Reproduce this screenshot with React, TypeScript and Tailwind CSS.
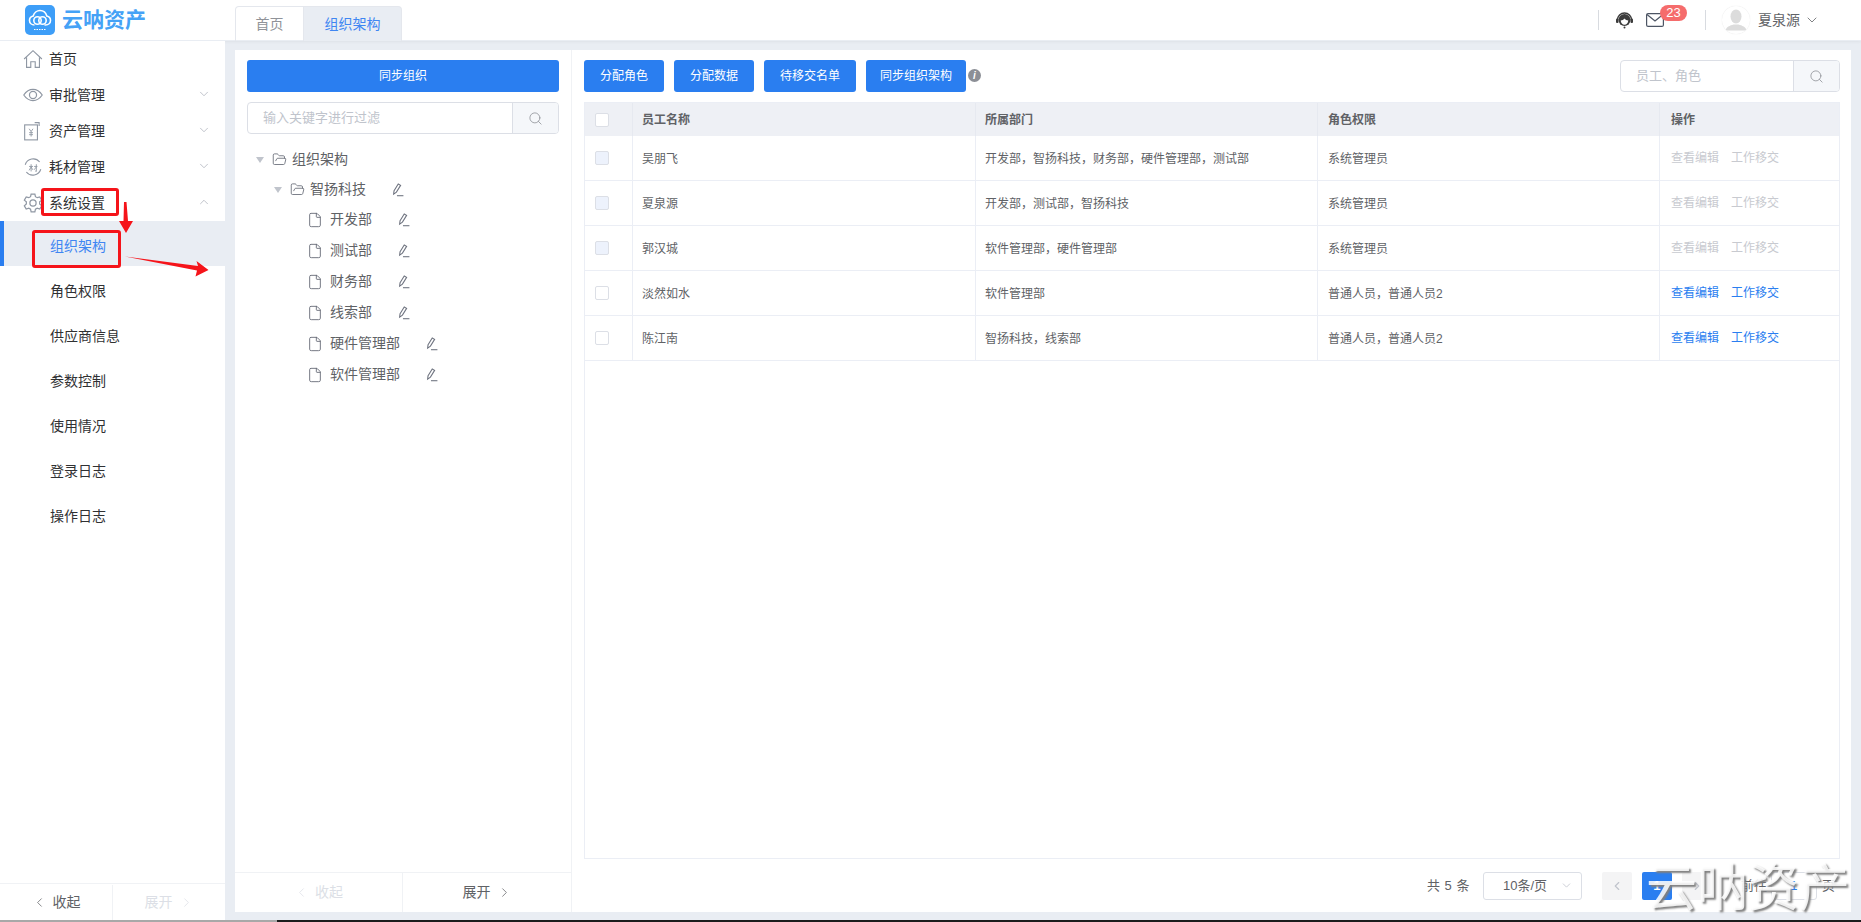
import { ChevronDown, ChevronLeft, ChevronRight, ChevronUp, File, FolderOpen, Search } from "lucide-react"

const font = "font-['Liberation_Sans','Noto_Sans_CJK_SC',sans-serif]"

function HouseIcon() {
  return (
    <svg viewBox="0 0 18 18" className="h-[20px] w-[20px]" fill="none" stroke="#8f97a3" strokeWidth="1">
      <path d="M1 9 9 1.5 17 9" />
      <path d="M3.2 7.5V16.5H7V11.5H11V16.5H14.8V7.5" />
    </svg>
  )
}

function EyeIcon() {
  return (
    <svg viewBox="0 0 18 18" className="h-[20px] w-[20px]" fill="none" stroke="#8f97a3" strokeWidth="1.1">
      <path d="M.7 9C3 5.6 5.8 4 9 4s6 1.600 8.300 5c-2.300 3.400-5.100 5-8.300 5S3 12.400.7 9Z" />
      <circle cx="9" cy="9" r="3.200" />
    </svg>
  )
}

function MoneyIcon() {
  return (
    <svg viewBox="0 0 18 18" className="h-[20px] w-[20px]" fill="none" stroke="#8f97a3" strokeWidth="1">
      <rect x="1.500" y="3.500" width="11.500" height="13.500" />
      <path d="M14.500 4.500V1.500H10.500" />
      <path d="M5.500 7 7.300 9.500 9 7M7.300 9.500V14M5.500 10.500H9M5.500 12.300H9" strokeWidth=".8" />
    </svg>
  )
}

function MaterialIcon() {
  return (
    <svg viewBox="0 0 18 18" className="h-[20px] w-[20px]" fill="none" stroke="#8f97a3" strokeWidth="1">
      <path d="M2 7A7.500 7.500 0 0 1 15 4.500" />
      <path d="M16 11A7.500 7.500 0 0 1 3 13.500" />
      <path d="M5.500 8.500H9M7.300 6.500V13M7.300 9 5.500 12M7.300 9 8.800 11.500M10 8.500H13M12 6.500V13L11 12.600M12 9 10 11.500" strokeWidth=".8" />
    </svg>
  )
}

function GearIcon() {
  return (
    <svg viewBox="0 0 18 18" className="h-[20px] w-[20px]" fill="none" stroke="#8f97a3" strokeWidth="1.100">
      <path d="M7.300 1h3.400l.5 2.300 1.600.9 2.300-.7 1.700 2.900-1.800 1.600v1.900l1.800 1.600-1.700 2.900-2.300-.7-1.600.9-.5 2.300H7.300l-.5-2.300-1.600-.9-2.300.7-1.700-2.900 1.800-1.600V8L1.200 6.400l1.700-2.900 2.300.7 1.600-.9Z" />
      <circle cx="9" cy="9" r="2.800" />
    </svg>
  )
}

function PencilIcon() {
  return (
    <svg viewBox="0 0 12 13" className="h-[14px] w-[13px] shrink-0" fill="none" stroke="#6f7480" strokeWidth="1">
      <path d="M2.800 7.200 6.700 .9l2.200 1.300L5 8.500 2.400 10.300Z" />
      <path d="M5.500 11.800H11.500" />
    </svg>
  )
}

function Logo() {
  return (
    <div className="flex h-[30px] w-[30px] items-center justify-center rounded-[5px] bg-[#3d9ef8]">
      <svg viewBox="0 0 30 30" className="h-[30px] w-[30px]" fill="none" stroke="#fff" strokeWidth="1.600">
        <path d="M9.500 20C6.800 20 4.500 18.200 4.500 15.500c0-2.300 1.500-4 3.700-4.500C9 8 11.800 5.500 15 5.500c3.300 0 6 2.500 6.800 5.500 2.200.5 3.700 2.200 3.700 4.500 0 2.700-2.200 4.500-5 4.500h-1" />
        <circle cx="12.500" cy="15.500" r="3.700" />
        <circle cx="17.500" cy="15.500" r="3.700" />
        <path d="M9 24.500H21" strokeWidth="1" strokeDasharray="1.500 1" />
      </svg>
    </div>
  )
}

function Headset() {
  return (
    <svg viewBox="0 0 17 18" className="h-[18px] w-[17px]">
      <path d="M1.500 9a7 7 0 0 1 14 0" fill="none" stroke="#3c3c3c" strokeWidth="1.500" />
      <circle cx="8.500" cy="9" r="6" fill="#3c3c3c" />
      <path d="M4.700 9.500c1.500 0 3-1 3.800-2 .8 1 2.300 2 3.800 2-.2 2.500-1.700 4.200-3.800 4.200S4.900 12 4.700 9.500Z" fill="#fff" />
      <rect x="0" y="7.500" width="2.500" height="4.500" rx="1" fill="#3c3c3c" />
      <rect x="14.500" y="7.500" width="2.500" height="4.500" rx="1" fill="#3c3c3c" />
      <circle cx="8.500" cy="16.500" r="1" fill="#3c3c3c" />
    </svg>
  )
}

function MailIcon() {
  return (
    <svg viewBox="0 0 18 14" className="h-[14px] w-[18px]" fill="none" stroke="#4c5564" strokeWidth="1.200">
      <rect x=".6" y=".6" width="16.800" height="12.800" rx="1.500" />
      <path d="M1 1.500 9 8l8-6.500" />
    </svg>
  )
}

function Avatar() {
  return (
    <div className="flex h-[28px] w-[28px] items-center justify-center overflow-hidden rounded-full bg-white shadow-[0_0_1px_#dddddd]">
      <svg viewBox="0 0 28 28" className="h-[28px] w-[28px]" fill="#dcdcdc">
        <ellipse cx="14" cy="10.500" rx="5.500" ry="7" />
        <path d="M3.500 24.500c.5-3.500 4.500-5 8-6h5c3.500 1 7.500 2.500 8 6Z" />
      </svg>
    </div>
  )
}

function SearchBox({ placeholder, className }: { placeholder: string; className: string }) {
  return (
    <div className={`flex h-[32px] overflow-hidden rounded-[4px] border border-[#dcdfe6] bg-white ${className}`}>
      <div className="flex flex-1 items-center pl-[15px] text-[13px] text-[#c0c4cc]">{placeholder}</div>
      <div className="flex w-[46px] items-center justify-center border-l border-[#dcdfe6] bg-[#f5f7fa]">
        <Search className="h-[15px] w-[15px] text-[#909399]" strokeWidth={1.300} />
      </div>
    </div>
  )
}

const menu = [
  { label: "首页", icon: HouseIcon },
  { label: "审批管理", icon: EyeIcon, arrow: "down" },
  { label: "资产管理", icon: MoneyIcon, arrow: "down" },
  { label: "耗材管理", icon: MaterialIcon, arrow: "down" },
  { label: "系统设置", icon: GearIcon, arrow: "up" },
]

const subMenu = ["组织架构", "角色权限", "供应商信息", "参数控制", "使用情况", "登录日志", "操作日志"]

function Sidebar() {
  return (
    <aside className="flex w-[225px] shrink-0 flex-col bg-white">
      <div className="flex-1">
        {menu.map((item) => {
          const Icon = item.icon
          return (
            <div key={item.label} className="flex h-[36px] items-center pl-[23px] pr-[14px] text-[14px] text-[#303133]">
              <Icon />
              <span className="ml-[6px] flex-1">{item.label}</span>
              {item.arrow === "down" && <ChevronDown className="mb-[3px] h-[14px] w-[14px] text-[#a6abb5]" strokeWidth={1.200} />}
              {item.arrow === "up" && <ChevronUp className="mb-[3px] h-[14px] w-[14px] text-[#a6abb5]" strokeWidth={1.200} />}
            </div>
          )
        })}
        {subMenu.map((label, i) => (
          <div
            key={label}
            className={
              i === 0
                ? "flex h-[45px] items-center border-l-4 border-[#2a7ef0] bg-[#e9edf3] pl-[46px] pt-[5px] text-[14px] text-[#3f86f2]"
                : "flex h-[45px] items-center pl-[50px] pt-[5px] text-[14px] text-[#303133]"
            }
          >
            {label}
          </div>
        ))}
      </div>
      <div className="flex h-[37px] border-t border-[#f0f2f5] pt-[1px] text-[14px]">
        <div className="flex w-[113px] items-center justify-center gap-[6px] border-r border-[#f0f2f5] text-[#606266]">
          <ChevronLeft className="h-[15px] w-[15px]" strokeWidth={1.200} />
          收起
        </div>
        <div className="flex flex-1 items-center justify-center gap-[6px] text-[#dcdfe6]">
          展开
          <ChevronRight className="h-[15px] w-[15px]" strokeWidth={1.200} />
        </div>
      </div>
    </aside>
  )
}

const depts = [
  { name: "开发部", gap: "w-[67px]" },
  { name: "测试部", gap: "w-[67px]" },
  { name: "财务部", gap: "w-[67px]" },
  { name: "线索部", gap: "w-[67px]" },
  { name: "硬件管理部", gap: "w-[95px]" },
  { name: "软件管理部", gap: "w-[95px]" },
]

function Caret() {
  return <span className="h-0 w-0 border-x-[4px] border-t-[6px] border-x-transparent border-t-[#c0c4cc]" />
}

function TreePanel() {
  return (
    <div className="flex w-[337px] shrink-0 flex-col border-r border-[#f0f2f5]">
      <div className="flex-1 px-[12px] pt-[10px]">
        <div className="flex h-[32px] items-center justify-center rounded-[3px] bg-[#2a7ef0] text-[12px] text-white">同步组织</div>
        <SearchBox placeholder="输入关键字进行过滤" className="mt-[10px]" />
        <div className="mt-[10px] text-[14px] text-[#606266]">
          <div className="flex h-[31px] items-center pl-[9px]">
            <Caret />
            <FolderOpen className="ml-[8px] h-[15px] w-[15px] text-[#5f6470]" strokeWidth={1.300} />
            <span className="ml-[5px]">组织架构</span>
          </div>
          <div className="flex h-[29px] items-center pl-[27px]">
            <Caret />
            <FolderOpen className="ml-[8px] h-[15px] w-[15px] text-[#5f6470]" strokeWidth={1.300} />
            <span className="ml-[5px] w-[81px]">智扬科技</span>
            <PencilIcon />
          </div>
          {depts.map((d) => (
            <div key={d.name} className="flex h-[31px] items-center pl-[60px]">
              <File className="h-[16px] w-[16px] text-[#5f6470]" strokeWidth={1.300} />
              <span className={`ml-[7px] ${d.gap}`}>{d.name}</span>
              <PencilIcon />
            </div>
          ))}
        </div>
      </div>
      <div className="flex h-[40px] border-t border-[#f0f2f5] text-[14px]">
        <div className="flex w-[168px] items-center justify-center gap-[6px] border-r border-[#f0f2f5] text-[#dcdfe6]">
          <ChevronLeft className="h-[15px] w-[15px]" strokeWidth={1.200} />
          收起
        </div>
        <div className="flex flex-1 items-center justify-center gap-[6px] text-[#606266]">
          展开
          <ChevronRight className="h-[15px] w-[15px]" strokeWidth={1.200} />
        </div>
      </div>
    </div>
  )
}

const rows = [
  { name: "吴朋飞", dept: "开发部，智扬科技，财务部，硬件管理部，测试部", role: "系统管理员", locked: true },
  { name: "夏泉源", dept: "开发部，测试部，智扬科技", role: "系统管理员", locked: true },
  { name: "郭汉城", dept: "软件管理部，硬件管理部", role: "系统管理员", locked: true },
  { name: "淡然如水", dept: "软件管理部", role: "普通人员，普通人员2", locked: false },
  { name: "陈江南", dept: "智扬科技，线索部", role: "普通人员，普通人员2", locked: false },
]

const gridCols = "grid grid-cols-[48px_343px_342px_342px_1fr]"

function EmployeeTable() {
  return (
    <div className="mt-[10px] flex-1 border border-[#ebeef5] text-[12px] text-[#606266]">
      <div className={`${gridCols} h-[33px] bg-[#eef0f5] font-bold`}>
        <div className="flex items-center border-r border-[#e6e9f0] pl-[10px]">
          <span className="h-[14px] w-[14px] rounded-[2px] border border-[#dcdfe6] bg-white" />
        </div>
        <div className="flex items-center border-r border-[#e6e9f0] pl-[9px]">员工名称</div>
        <div className="flex items-center border-r border-[#e6e9f0] pl-[9px]">所属部门</div>
        <div className="flex items-center border-r border-[#e6e9f0] pl-[10px]">角色权限</div>
        <div className="flex items-center pl-[11px]">操作</div>
      </div>
      {rows.map((r) => (
        <div key={r.name} className={`${gridCols} h-[45px] border-b border-[#ebeef5]`}>
          <div className="flex items-center border-r border-[#ebeef5] pl-[10px]">
            <span className={`h-[14px] w-[14px] rounded-[2px] border border-[#dcdfe6] ${r.locked ? "bg-[#edf2fc]" : "bg-white"}`} />
          </div>
          <div className="flex items-center border-r border-[#ebeef5] pl-[9px] pt-[1px]">{r.name}</div>
          <div className="flex items-center border-r border-[#ebeef5] pl-[9px] pt-[1px]">{r.dept}</div>
          <div className="flex items-center border-r border-[#ebeef5] pl-[10px] pt-[1px]">{r.role}</div>
          <div className={`flex items-center gap-[12px] pl-[11px] ${r.locked ? "text-[#c8cad0]" : "text-[#2a7ef0]"}`}>
            <span>查看编辑</span>
            <span>工作移交</span>
          </div>
        </div>
      ))}
    </div>
  )
}

function Pagination() {
  return (
    <div className="flex h-[53px] items-center justify-end pr-[5px] text-[13px] text-[#606266]">
      <span className="tracking-[0.5px]">共 5 条</span>
      <div className="ml-[13px] flex h-[28px] w-[99px] items-center rounded-[3px] border border-[#dcdfe6] pl-[19px] pr-[8px]">
        <span className="flex-1">10条/页</span>
        <ChevronDown className="h-[13px] w-[13px] text-[#c0c4cc]" strokeWidth={1.500} />
      </div>
      <div className="ml-[20px] flex h-[28px] w-[30px] items-center justify-center rounded-[2px] bg-[#f4f4f5] text-[#c0c4cc]">
        <ChevronLeft className="h-[14px] w-[14px]" strokeWidth={2} />
      </div>
      <div className="ml-[10px] flex h-[28px] w-[30px] items-center justify-center rounded-[2px] bg-[#2a7ef0] font-bold text-white">1</div>
      <div className="ml-[10px] flex h-[28px] w-[30px] items-center justify-center rounded-[2px] bg-[#f4f4f5] text-[#c0c4cc]">
        <ChevronRight className="h-[14px] w-[14px]" strokeWidth={2} />
      </div>
      <span className="ml-[29px]">前往</span>
      <div className="ml-[4px] flex h-[28px] w-[46px] items-center justify-center rounded-[3px] border border-[#dcdfe6] text-[#2a7ef0]">1</div>
      <span className="ml-[5px]">页</span>
    </div>
  )
}

function MainPanel() {
  return (
    <div className="flex min-w-0 flex-1 flex-col pl-[12px] pr-[11px] pt-[10px]">
      <div className="flex h-[32px] items-center text-[12px] text-white">
        <div className="flex h-[32px] w-[80px] items-center justify-center rounded-[3px] bg-[#2a7ef0]">分配角色</div>
        <div className="ml-[10px] flex h-[32px] w-[80px] items-center justify-center rounded-[3px] bg-[#2a7ef0]">分配数据</div>
        <div className="ml-[10px] flex h-[32px] w-[92px] items-center justify-center rounded-[3px] bg-[#2a7ef0]">待移交名单</div>
        <div className="ml-[10px] flex h-[32px] w-[100px] items-center justify-center rounded-[3px] bg-[#2a7ef0]">同步组织架构</div>
        <span className="mb-[2px] ml-[2px] flex h-[13px] w-[13px] items-center justify-center rounded-full bg-[#8c8f96] text-[10px] font-bold italic">i</span>
        <SearchBox placeholder="员工、角色" className="ml-auto w-[220px]" />
      </div>
      <EmployeeTable />
      <Pagination />
    </div>
  )
}

export default function App() {
  return (
    <div className={`relative flex h-[922px] w-[1861px] flex-col overflow-hidden bg-[#e9edf3] ${font}`}>
      <header className="flex h-[41px] shrink-0 border-b border-[#e9edf3] bg-white shadow-[0_1px_3px_rgba(0,0,0,0.05)]">
        <div className="flex w-[235px] items-start pl-[25px] pt-[5px]">
          <Logo />
          <span className="ml-[7px] text-[21px] font-bold leading-[30px] text-[#45a2f6]">云呐资产</span>
        </div>
        <div className="mt-[6px] flex h-[35px] text-[14px]">
          <div className="flex w-[69px] items-center justify-center rounded-tl-[4px] border border-b-0 border-[#e4e7ed] text-[#909399]">首页</div>
          <div className="flex w-[98px] items-center justify-center rounded-tr-[4px] border border-b-0 border-l-0 border-[#e4e7ed] bg-[#e9edf3] text-[#3f86f2]">组织架构</div>
        </div>
        <div className="ml-auto flex items-center pr-[41px]">
          <span className="h-[20px] w-px bg-[#d8dbe0]" />
          <span className="ml-[17px]"><Headset /></span>
          <span className="relative ml-[13px] flex">
            <MailIcon />
            <span className="absolute left-[14px] top-[-8px] flex h-[16px] w-[27px] items-center justify-center rounded-full bg-[#f56c6c] text-[13px] text-white">23</span>
          </span>
          <span className="ml-[41px] h-[20px] w-px bg-[#d8dbe0]" />
          <span className="ml-[16px]"><Avatar /></span>
          <span className="ml-[8px] text-[14px] text-[#606266]">夏泉源</span>
          <ChevronDown className="ml-[4px] h-[16px] w-[16px] text-[#606266]" strokeWidth={1.200} />
        </div>
      </header>
      <div className="flex min-h-0 flex-1">
        <Sidebar />
        <div className="flex flex-1 px-[10px] pb-[8px] pt-[9px]">
          <div className="flex flex-1 bg-white">
            <TreePanel />
            <MainPanel />
          </div>
        </div>
      </div>
      <div className="flex h-[2px] shrink-0">
        <div className="w-[277px] bg-[#a8a8a8]" />
        <div className="flex-1 bg-[#1b1b1b]" />
      </div>

      {/* annotations drawn over the shot */}
      <div className="absolute left-[41px] top-[188px] h-[28px] w-[78px] rounded-[3px] border-[3px] border-[#f5141a]" />
      <div className="absolute left-[32px] top-[230px] h-[38px] w-[89px] rounded-[3px] border-[3px] border-[#f5141a]" />
      <svg className="absolute left-0 top-0 h-[300px] w-[240px]" viewBox="0 0 240 300" fill="#f5141a">
        <path d="M124 202h2.500l1.500 19h5l-7 12-7-12h4.500Z" />
        <path d="M125 256.500l73 9.500-1.500-5 12 9-13 6.500 1.500-6Z" />
      </svg>
      <div className="absolute left-[1646px] top-[856px] whitespace-nowrap text-[51px] leading-[66px] text-white/85 [text-shadow:2px_2px_2px_#808080]">云呐资产</div>
    </div>
  )
}
